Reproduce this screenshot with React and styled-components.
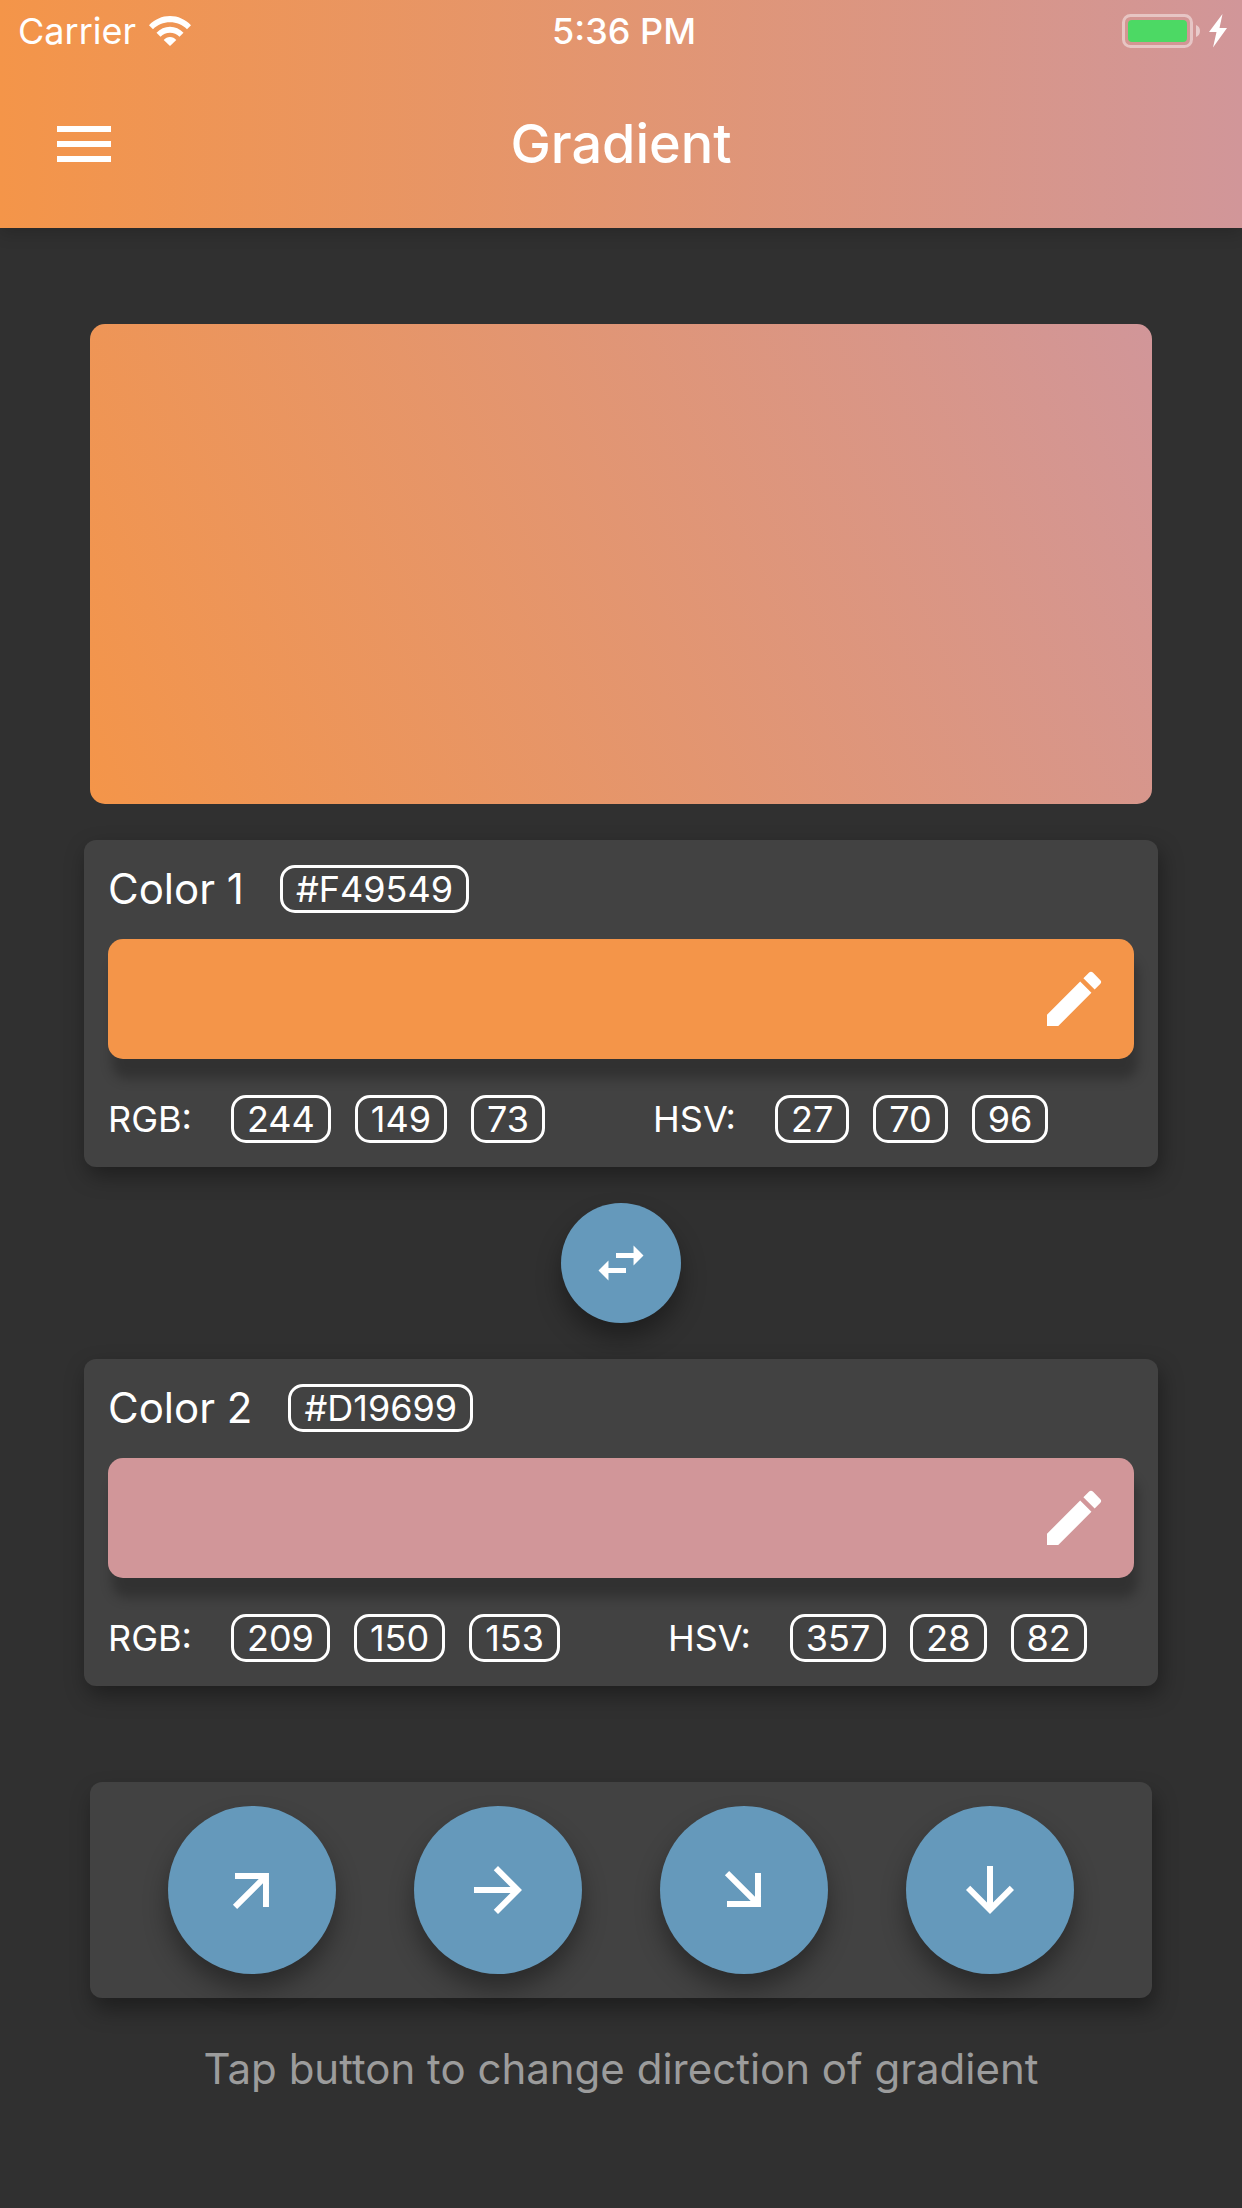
import React, { useState } from "react";
import styled, { createGlobalStyle } from "styled-components";

const GlobalStyle = createGlobalStyle`
  *, *::before, *::after { box-sizing: border-box; }
  body {
    margin: 0;
    background: #303030;
    color: #fff;
    font-family: Inter, Roboto, "Liberation Sans", sans-serif;
  }
  button { border: 0; padding: 0; color: inherit; font: inherit; cursor: pointer; }
  svg { display: block; fill: currentColor; }
`;

const Screen = styled.div`
  min-height: 100vh;
`;

const Header = styled.header`
  background: linear-gradient(90deg, ${(p) => p.$from}, ${(p) => p.$to});
  box-shadow: 0 6px 15px rgba(0, 0, 0, 0.16);
`;

const StatusBar = styled.div`
  display: grid;
  grid-template-columns: 1fr auto 1fr;
  align-items: center;
  height: 60px;
  padding: 2px 12px 0 18px;
  font-size: 36px;
  line-height: 44px;
`;

const StatusGroup = styled.div`
  display: flex;
  align-items: center;
  gap: ${(p) => p.$gap}px;
  justify-content: ${(p) => (p.$end ? "flex-end" : "flex-start")};
`;

const Clock = styled.time`
  font-weight: 500;
`;

const Toolbar = styled.div`
  display: grid;
  grid-template-columns: 72px 1fr 72px;
  align-items: center;
  height: 168px;
  padding: 0 48px;
`;

const MenuButton = styled.button`
  background: none;
`;

const Title = styled.h1`
  margin: 0;
  text-align: center;
  font-size: 54px;
  line-height: 72px;
  font-weight: 500;
`;

const Content = styled.main`
  display: flex;
  flex-direction: column;
  padding: 96px 84px;
`;

const Preview = styled.div`
  height: 480px;
  margin: 0 6px 36px;
  border-radius: 15px;
  background: linear-gradient(${(p) => p.$angle}deg, ${(p) => p.$from}, ${(p) => p.$to});
`;

const Card = styled.section`
  padding: 24px;
  border-radius: 12px;
  background: #424242;
  box-shadow: 3px 9px 21px rgba(0, 0, 0, 0.36);
`;

const CardHead = styled.div`
  display: flex;
  align-items: center;
  gap: 36px;
  height: 50px;
`;

const CardTitle = styled.h2`
  margin: 0;
  font-size: 42px;
  line-height: 50px;
  font-weight: 400;
`;

const Chip = styled.span`
  height: 48px;
  padding: 0 13px;
  border: 3px solid #fff;
  border-radius: 15px;
  font-size: 36px;
  line-height: 42px;
`;

const Swatch = styled.button`
  display: flex;
  align-items: center;
  justify-content: flex-end;
  width: 100%;
  height: 120px;
  margin: 25px 0 36px;
  padding: 0 24px;
  border-radius: 15px;
  background: ${(p) => p.$color};
  box-shadow: 4px 20px 12px rgba(0, 0, 0, 0.25);
`;

const Values = styled.div`
  display: flex;
  flex-wrap: wrap;
  gap: 24px 108px;
`;

const ValueGroup = styled.div`
  display: flex;
  align-items: center;
  gap: 24px;
`;

const ValueLabel = styled.span`
  margin-right: 15px;
  font-size: 36px;
  line-height: 48px;
`;

const RoundButton = styled.button`
  display: grid;
  place-items: center;
  width: ${(p) => p.$size}px;
  height: ${(p) => p.$size}px;
  border-radius: 50%;
  background: #6599bb;
  box-shadow: 0 15px 24px rgba(0, 0, 0, 0.36);
`;

const SwapRow = styled.div`
  display: flex;
  justify-content: center;
  padding: 36px 0;
`;

const Directions = styled.div`
  display: flex;
  justify-content: space-evenly;
  margin: 96px 6px 46px;
  padding: 24px 0;
  border-radius: 12px;
  background: #424242;
  box-shadow: 3px 12px 21px rgba(0, 0, 0, 0.36);
`;

const Arrow = styled.svg`
  transform: rotate(${(p) => p.$turn}deg);
`;

const Hint = styled.p`
  margin: 0;
  text-align: center;
  font-size: 42px;
  line-height: 50px;
  color: #9c9c9c;
`;

const Icon = ({ size, d }) => (
  <svg width={size} height={size} viewBox="0 0 24 24" aria-hidden="true">
    <path d={d} />
  </svg>
);

const MENU = "M3 18h18v-2H3v2zm0-5h18v-2H3v2zm0-7v2h18V6H3z";
const PENCIL =
  "M3 17.25V21h3.75L17.81 9.94l-3.75-3.75L3 17.25zM20.71 7.04a1 1 0 0 0 0-1.41l-2.34-2.34a1 1 0 0 0-1.41 0l-1.83 1.83 3.75 3.75 1.83-1.83z";
const SWAP =
  "M6.99 11L3 15l3.99 4v-3H14v-2H6.99v-3zM21 9l-3.99-4v3H10v2h7.01v3L21 9z";
const FORWARD = "M12 4l-1.41 1.41L16.17 11H4v2h12.17l-5.58 5.59L12 20l8-8z";

const Wifi = () => (
  <svg width="42" height="30" viewBox="0 0 42 30" aria-hidden="true">
    <path d="M0 9.2C5.8 3.3 13 0 21 0s15.2 3.3 21 9.2l-4 4C33.4 8.7 27.6 6.3 21 6.3S8.6 8.7 4 13.2z" />
    <path d="M7.500 16.700C11.2 12.8 15.8 10.7 21 10.7s9.8 2.1 13.5 6l-4 4C27.9 18.1 24.700 16.800 21 16.800s-6.900 1.300-9.500 3.900z" />
    <path d="M14.7 23.9c1.7-1.9 3.8-2.9 6.3-2.900s4.600 1 6.300 2.900L21 30z" />
  </svg>
);

const Battery = () => (
  <svg width="78" height="34" viewBox="0 0 78 34" aria-hidden="true">
    <rect x="1.5" y="1.5" width="68" height="31" rx="7" fill="none" stroke="#fff" strokeOpacity="0.45" strokeWidth="3" />
    <rect x="6" y="6" width="59" height="22" rx="4" fill="#4cd964" />
    <path d="M74 11c2.600 1 4 3.300 4 6s-1.400 5-4 6z" fillOpacity="0.5" />
  </svg>
);

const Bolt = () => (
  <svg width="21" height="34" viewBox="0 0 21 34" aria-hidden="true">
    <path d="M13.5 0L0 18h7.500L4 33.500 18 14h-7.500z" />
  </svg>
);

const COLORS = [
  { hex: "#F49549", rgb: [244, 149, 73], hsv: [27, 70, 96] },
  { hex: "#D19699", rgb: [209, 150, 153], hsv: [357, 28, 82] },
];

const DIRECTIONS = [
  { label: "Towards top right", turn: -45, angle: 66 },
  { label: "Towards right", turn: 0, angle: 90 },
  { label: "Towards bottom right", turn: 45, angle: 114 },
  { label: "Towards bottom", turn: 90, angle: 180 },
];

const ColorCard = ({ name, color }) => (
  <Card>
    <CardHead>
      <CardTitle>{name}</CardTitle>
      <Chip>{color.hex}</Chip>
    </CardHead>
    <Swatch $color={color.hex} aria-label={`Edit ${name}`}>
      <Icon size={72} d={PENCIL} />
    </Swatch>
    <Values>
      {[["RGB:", color.rgb], ["HSV:", color.hsv]].map(([label, parts]) => (
        <ValueGroup key={label}>
          <ValueLabel>{label}</ValueLabel>
          {parts.map((part, i) => (
            <Chip key={i}>{part}</Chip>
          ))}
        </ValueGroup>
      ))}
    </Values>
  </Card>
);

export default function App() {
  const [colors, setColors] = useState(COLORS);
  const [angle, setAngle] = useState(DIRECTIONS[0].angle);
  const [first, second] = colors;

  return (
    <Screen>
      <GlobalStyle />
      <Header $from={first.hex} $to={second.hex}>
        <StatusBar>
          <StatusGroup $gap={13}>
            <span>Carrier</span>
            <Wifi />
          </StatusGroup>
          <Clock>5:36 PM</Clock>
          <StatusGroup $gap={9} $end>
            <Battery />
            <Bolt />
          </StatusGroup>
        </StatusBar>
        <Toolbar>
          <MenuButton aria-label="Menu">
            <Icon size={72} d={MENU} />
          </MenuButton>
          <Title>Gradient</Title>
        </Toolbar>
      </Header>
      <Content>
        <Preview $angle={angle} $from={first.hex} $to={second.hex} />
        <ColorCard name="Color 1" color={first} />
        <SwapRow>
          <RoundButton $size={120} aria-label="Swap colors" onClick={() => setColors([second, first])}>
            <Icon size={60} d={SWAP} />
          </RoundButton>
        </SwapRow>
        <ColorCard name="Color 2" color={second} />
        <Directions>
          {DIRECTIONS.map((dir) => (
            <RoundButton key={dir.label} $size={168} aria-label={dir.label} onClick={() => setAngle(dir.angle)}>
              <Arrow $turn={dir.turn} width="72" height="72" viewBox="0 0 24 24" aria-hidden="true">
                <path d={FORWARD} />
              </Arrow>
            </RoundButton>
          ))}
        </Directions>
        <Hint>Tap button to change direction of gradient</Hint>
      </Content>
    </Screen>
  );
}
